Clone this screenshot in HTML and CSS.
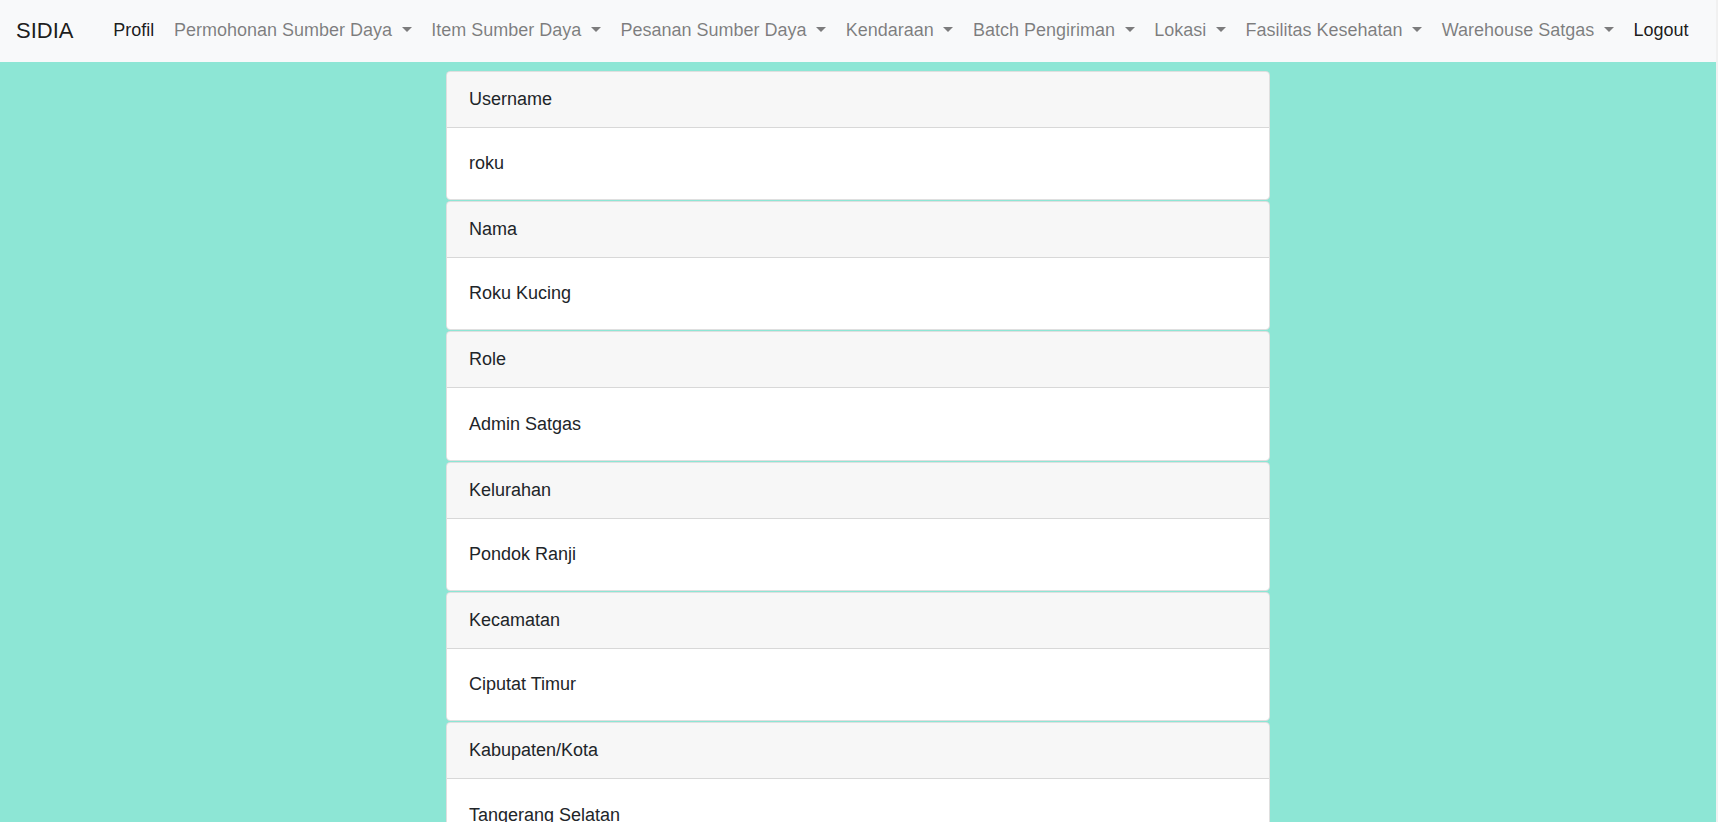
FILE: index.html
```html
<!DOCTYPE html>
<html lang="id">
<head>
<meta charset="utf-8">
<title>SIDIA - Profil</title>
<link rel="stylesheet" href="styles.css">
</head>
<body>
<nav class="navbar">
  <a class="brand" href="#">SIDIA</a>
  <ul class="nav">
    <li><a class="nav-link active" href="#">Profil</a></li>
    <li><a class="nav-link dropdown" href="#">Permohonan Sumber Daya</a></li>
    <li><a class="nav-link dropdown" href="#">Item Sumber Daya</a></li>
    <li><a class="nav-link dropdown" href="#">Pesanan Sumber Daya</a></li>
    <li><a class="nav-link dropdown" href="#">Kendaraan</a></li>
    <li><a class="nav-link dropdown" href="#">Batch Pengiriman</a></li>
    <li><a class="nav-link dropdown" href="#">Lokasi</a></li>
    <li><a class="nav-link dropdown" href="#">Fasilitas Kesehatan</a></li>
    <li><a class="nav-link dropdown" href="#">Warehouse Satgas</a></li>
    <li><a class="nav-link active" href="#">Logout</a></li>
  </ul>
</nav>
<main class="content">
  <div class="card"><div class="card-header">Username</div><div class="card-body">roku</div></div>
  <div class="card"><div class="card-header">Nama</div><div class="card-body">Roku Kucing</div></div>
  <div class="card"><div class="card-header">Role</div><div class="card-body">Admin Satgas</div></div>
  <div class="card"><div class="card-header">Kelurahan</div><div class="card-body">Pondok Ranji</div></div>
  <div class="card"><div class="card-header">Kecamatan</div><div class="card-body">Ciputat Timur</div></div>
  <div class="card"><div class="card-header">Kabupaten/Kota</div><div class="card-body">Tangerang Selatan</div></div>
  <div class="card"><div class="card-header">Provinsi</div><div class="card-body">Banten</div></div>
</main>
</body>
</html>
```
FILE: styles.css
```css
html {
  background: #f1f1f1;
  height: 100%;
}
body {
  margin: 0 2px 0 0;
  min-height: 100%;
  background: #8de6d5;
  font-family: "Liberation Sans", Arial, sans-serif;
  font-size: 18px;
  line-height: 27px;
  color: #212529;
}
.navbar {
  display: flex;
  align-items: center;
  background: #f8f9fa;
  padding: 8.5px 17.6px 8.5px 16px;
}
.brand {
  font-size: 22px;
  line-height: 33px;
  padding: 5.5px 0;
  margin-right: 30px;
  color: rgba(0, 0, 0, 0.9);
  text-decoration: none;
}
.nav {
  display: flex;
  list-style: none;
  margin: 0;
  padding: 0;
}
.nav-link {
  display: block;
  padding: 8.8px 9.8px;
  color: rgba(0, 0, 0, 0.5);
  text-decoration: none;
}
.nav-link.active {
  color: rgba(0, 0, 0, 0.9);
}
.dropdown::after {
  content: "";
  display: inline-block;
  margin-left: 9.6px;
  vertical-align: 0.255em;
  border-top: 0.3em solid;
  border-right: 0.3em solid transparent;
  border-left: 0.3em solid transparent;
  border-bottom: 0;
}
.content {
  width: 824px;
  margin: 0 auto;
  padding-top: 9px;
}
.card {
  background: #fff;
  border: 1px solid rgba(0, 0, 0, 0.125);
  border-radius: 4.4px;
  margin-bottom: 1px;
  overflow: hidden;
}
.card-header {
  background: rgba(0, 0, 0, 0.03);
  border-bottom: 1px solid rgba(0, 0, 0, 0.125);
  padding: 14px 22px;
}
.card-body {
  padding: 22.2px 22px;
}
```
